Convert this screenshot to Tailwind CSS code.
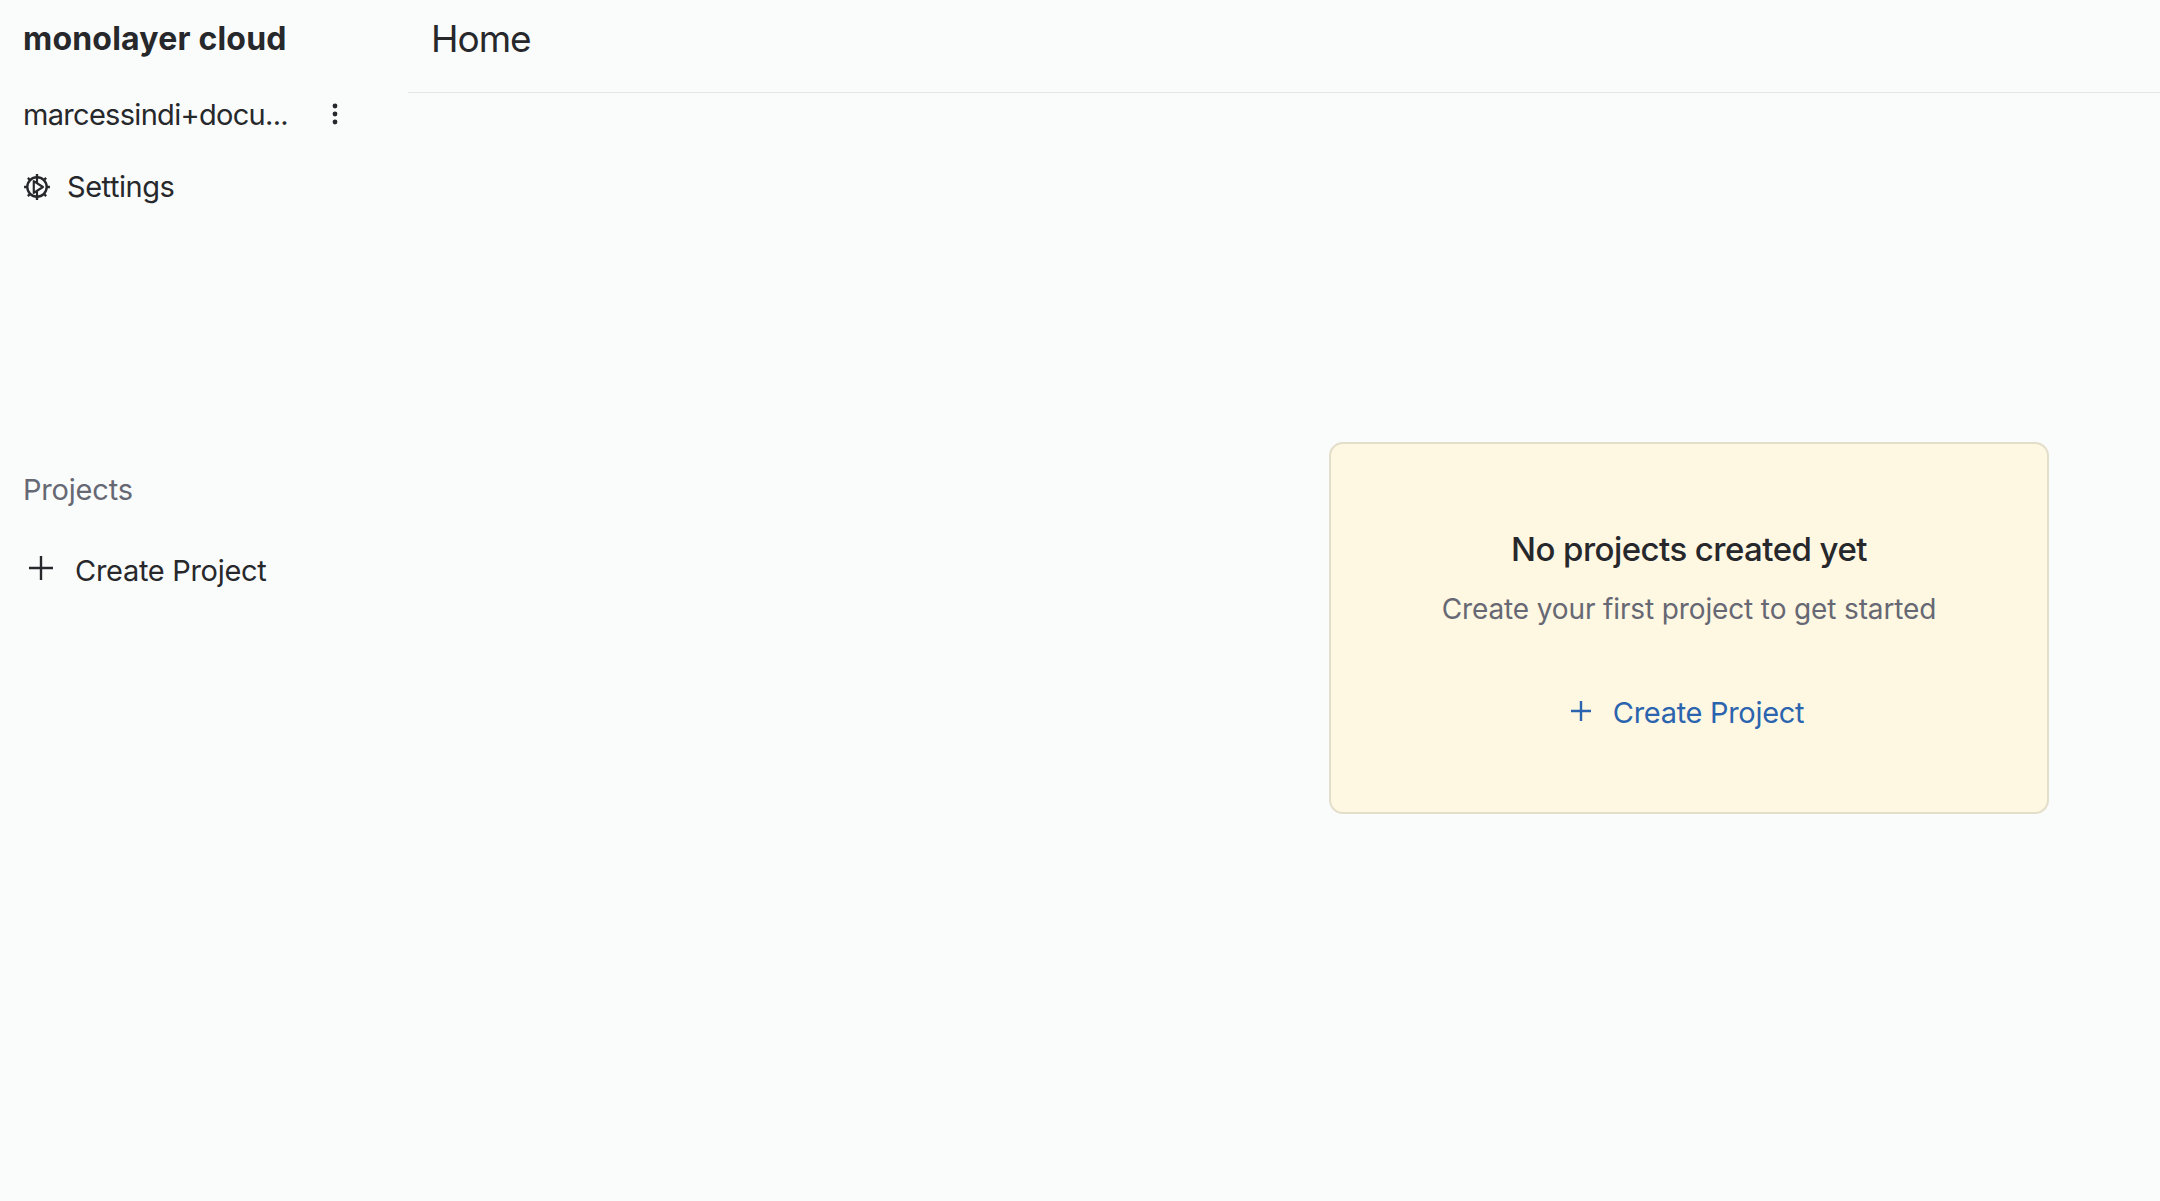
<!doctype html>
<html lang="en">
<head>
    <meta charset="UTF-8">
    <meta name="viewport" content="width=device-width, initial-scale=1.0">
    <script src="https://cdn.jsdelivr.net/npm/@tailwindcss/browser@4"></script>
    <title>monolayer cloud</title>
</head>
<body class="bg-[#fafcfb] text-[#27282c] font-['Inter',sans-serif]">

<div class="flex h-[1201px] overflow-hidden">
    <!-- sidebar -->
    <aside class="w-[408px] shrink-0 pl-[23px] pr-[69px]">
        <div class="h-[78px] flex items-center text-[32px] font-bold tracking-[0.2px]">monolayer cloud</div>
        <div class="h-[74px] flex items-center justify-between text-[29px] tracking-[-0.7px]">
            <span>marcessindi+docu...</span>
            <svg class="w-[24px] h-[24px] mr-[-8px] mt-[-2px]" viewBox="0 0 24 24" fill="#27282c">
                <circle cx="12" cy="4" r="2.4"/>
                <circle cx="12" cy="12" r="2.4"/>
                <circle cx="12" cy="20" r="2.4"/>
            </svg>
        </div>
        <div class="h-[70px] flex items-center gap-[16px] text-[29px] tracking-[-0.45px]">
            <svg class="w-[28px] h-[28px] shrink-0 mt-[-1px]" viewBox="0 0 26 26" fill="none" stroke="#27282c" stroke-width="2.2">
                <circle cx="13" cy="13" r="9"/>
                <path d="M13 1v3M13 22v3M1 13h3M22 13h3M4.500 4.500l2.200 2.200M19.300 19.300l2.200 2.200M4.500 21.500l2.200-2.200M19.300 6.700l2.200-2.200"/>
                <path d="M13 4v5.500M13 22v-5.500M10 7.500v11l8.500-5.500z" stroke-width="2" stroke-linejoin="round"/>
            </svg>
            <span>Settings</span>
        </div>
        <div class="mt-[246px] text-[29px] text-[#666873] tracking-[-0.2px]">Projects</div>
        <div class="mt-[37px] h-[44px] flex items-center gap-[19px] text-[29px] tracking-[-0.3px]">
            <svg class="w-[30px] h-[30px] shrink-0 ml-[3px] mt-[-5px]" viewBox="0 0 30 30" fill="none" stroke="#27282c" stroke-width="2.400">
                <path d="M15 3v24M3 15h24"/>
            </svg>
            <span>Create Project</span>
        </div>
    </aside>

    <!-- main -->
    <main class="flex-1 min-w-0">
        <header class="h-[93px] border-b border-[#e4e5e5] pl-[23px] flex items-center pb-[14px]">
            <h1 class="text-[37px] tracking-[-1px]">Home</h1>
        </header>
        <div class="flex justify-end pr-[111px] pt-[349px]">
            <section class="w-[720px] h-[372px] bg-[#fef7e2] border-2 border-[#e3dec9] rounded-[14px] flex flex-col items-center">
                <h2 class="mt-[81px] text-[33px] font-medium tracking-[-0.55px] text-[#27282c]">No projects created yet</h2>
                <p class="mt-[13px] text-[28px] text-[#666873] tracking-[-0.13px]">Create your first project to get started</p>
                <a class="mt-[61px] mr-[5px] flex items-center gap-[20px] text-[29px] tracking-[-0.3px] text-[#2b64ae]">
                    <svg class="w-[24px] h-[24px] shrink-0 mt-[-2px]" viewBox="0 0 24 24" fill="none" stroke="#2b64ae" stroke-width="2.400">
                        <path d="M12 2v20M2 12h20"/>
                    </svg>
                    <span>Create Project</span>
                </a>
            </section>
        </div>
    </main>
</div>

</body>
</html>
